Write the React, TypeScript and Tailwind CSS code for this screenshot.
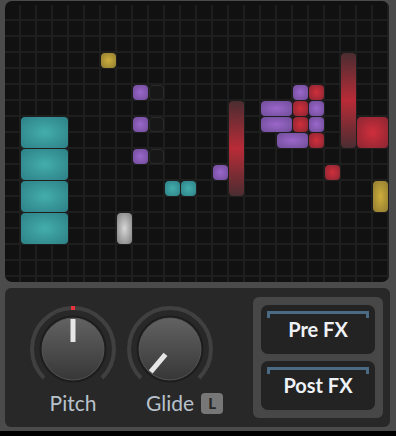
import React from "react";

type Block = { pos: string; fill: string };

const TEAL = "bg-[radial-gradient(ellipse_at_center,#44adac_0%,#2c8086_100%)]";
const PURPLE = "bg-[radial-gradient(ellipse_at_center,#9b67c9_0%,#6e4c98_100%)]";
const RED = "bg-[radial-gradient(ellipse_at_center,#cf2f3b_0%,#8a2532_100%)]";
const RED_BAR = "bg-[linear-gradient(to_bottom,#4a2d31_0%,#b82b37_50%,#4a2d31_100%)]";
const YELLOW = "bg-[radial-gradient(ellipse_at_center,#cdad3d_0%,#8f7b2f_100%)]";
const GRAY = "bg-[radial-gradient(ellipse_at_center,#d6d6d6_0%,#7d7d7d_100%)]";
const EMPTY = "border border-[#2a2a2a] bg-[#171717]";

const blocks: Block[] = [
  { pos: "col-start-7 row-start-4", fill: YELLOW },
  { pos: "col-start-9 row-start-6", fill: PURPLE },
  { pos: "col-start-10 row-start-6", fill: EMPTY },
  { pos: "col-start-9 row-start-8", fill: PURPLE },
  { pos: "col-start-10 row-start-8", fill: EMPTY },
  { pos: "col-start-9 row-start-10", fill: PURPLE },
  { pos: "col-start-10 row-start-10", fill: EMPTY },
  { pos: "col-start-2 row-start-8 col-span-3 row-span-2", fill: TEAL },
  { pos: "col-start-2 row-start-10 col-span-3 row-span-2", fill: TEAL },
  { pos: "col-start-2 row-start-12 col-span-3 row-span-2", fill: TEAL },
  { pos: "col-start-2 row-start-14 col-span-3 row-span-2", fill: TEAL },
  { pos: "col-start-8 row-start-14 row-span-2", fill: GRAY },
  { pos: "col-start-11 row-start-12", fill: TEAL },
  { pos: "col-start-12 row-start-12", fill: TEAL },
  { pos: "col-start-14 row-start-11", fill: PURPLE },
  { pos: "col-start-15 row-start-7 row-span-6", fill: RED_BAR },
  { pos: "col-start-17 row-start-7 col-span-2", fill: PURPLE },
  { pos: "col-start-17 row-start-8 col-span-2", fill: PURPLE },
  { pos: "col-start-18 row-start-9 col-span-2", fill: PURPLE },
  { pos: "col-start-19 row-start-6", fill: PURPLE },
  { pos: "col-start-20 row-start-6", fill: RED },
  { pos: "col-start-19 row-start-7", fill: RED },
  { pos: "col-start-20 row-start-7", fill: PURPLE },
  { pos: "col-start-19 row-start-8", fill: RED },
  { pos: "col-start-20 row-start-8", fill: PURPLE },
  { pos: "col-start-20 row-start-9", fill: RED },
  { pos: "col-start-21 row-start-11", fill: RED },
  { pos: "col-start-22 row-start-4 row-span-6", fill: RED_BAR },
  { pos: "col-start-23 row-start-8 col-span-2 row-span-2", fill: RED },
  { pos: "col-start-24 row-start-12 row-span-2", fill: YELLOW },
];

function Knob({ id, angle, dot }: { id: string; angle: number; dot?: boolean }) {
  return (
    <svg width="90" height="90" viewBox="0 0 90 90">
      <defs>
        <linearGradient id={id} x1="0" y1="0" x2="0" y2="1">
          <stop offset="0" stopColor="#626262" />
          <stop offset="1" stopColor="#373737" />
        </linearGradient>
      </defs>
      <path
        d="M 16.01 73.99 A 41 41 0 1 1 73.99 73.99"
        fill="none"
        stroke="#404040"
        strokeWidth="4"
      />
      {dot && <rect x="43" y="2" width="4" height="4" fill="#e8323c" />}
      <circle cx="45" cy="45" r="33.5" fill="#1d1d1d" />
      <circle cx="45" cy="45" r="31" fill={`url(#${id})`} stroke="#5a5a5a" strokeWidth="0.8" />
      <g transform={`rotate(${angle} 45 45)`}>
        <rect x="42.5" y="15" width="5" height="23" fill="#e6e6e6" />
      </g>
    </svg>
  );
}

function FxButton({ label }: { label: string }) {
  return (
    <div className="flex h-[49px] flex-col items-center rounded-[7px] bg-[#232323] pt-[6px]">
      <div className="h-[7px] w-[102px] border-x-[3px] border-t-[3px] border-[#4b6a83]" />
      <span className="-mt-[1px] text-[20px] leading-[24px] font-bold text-[#eef2f6]">
        {label}
      </span>
    </div>
  );
}

const App: React.FC = () => {
  return (
    <div
      className="flex h-[436px] w-[396px] flex-col bg-[#4b4b4b] pt-[1px] pl-[5px]"
      style={{ fontFamily: "Lato, 'Open Sans', sans-serif" }}
    >
      <div className="h-[281px] w-[384px] overflow-hidden rounded-[7px] bg-[#111111] pt-[4px]">
        <div className="grid h-[288px] grid-cols-[repeat(24,16px)] grid-rows-[repeat(18,16px)] bg-[linear-gradient(to_right,transparent_14px,#1e1e1e_14px),linear-gradient(to_bottom,transparent_14px,#1e1e1e_14px)] bg-[size:16px_16px]">
          {blocks.map((b, i) => (
            <div key={i} className={`mr-px mb-px rounded-[4px] ${b.pos} ${b.fill}`} />
          ))}
        </div>
      </div>

      <div className="mt-[6px] flex h-[139px] w-[385px] rounded-[6px] bg-[#282828]">
        <div className="flex gap-[7px] pt-[16px] pl-[23px]">
          <div className="flex w-[90px] flex-col items-center">
            <Knob id="kp" angle={0} dot />
            <span className="-mt-[4px] text-[21px] leading-[25px] text-[#b8c2cc]">Pitch</span>
          </div>
          <div className="flex w-[90px] flex-col items-center">
            <Knob id="kg" angle={-140} />
            <span className="relative -mt-[4px] text-[21px] leading-[25px] text-[#b8c2cc]">
              Glide
              <span className="absolute top-[3px] left-full ml-[7px] flex h-[21px] w-[22px] items-center justify-center rounded-[4px] bg-[#777777] text-[15px] leading-none font-black text-[#262626]">
                L
              </span>
            </span>
          </div>
        </div>
        <div className="mt-[9px] mr-[7px] ml-auto flex h-[121px] w-[130px] flex-col gap-[7px] rounded-[6px] bg-[#474747] p-[8px]">
          <FxButton label="Pre FX" />
          <FxButton label="Post FX" />
        </div>
      </div>

      <div className="mt-auto h-[5px] w-[396px] -ml-[5px] bg-black" />
    </div>
  );
};

export default App;
